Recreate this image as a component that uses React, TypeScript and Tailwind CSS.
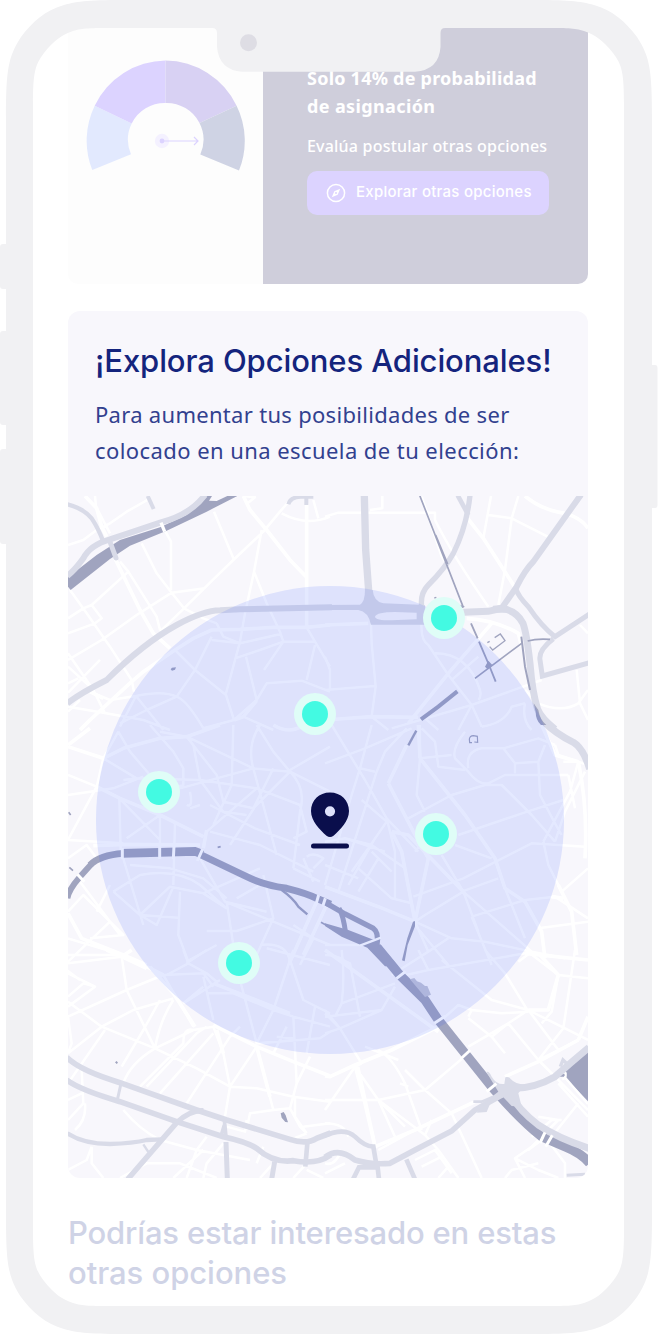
import React from 'react';

// Each tile is drawn in its own units, 3 units to one pixel
const MAP_TILES = [
    {
        id: 'nw', x: -8, y: -6,
        streets: 'M24 165L70 150L110 120L150 100L200 65L262 30M105 18L108 50L150 130M245 160L290 250L335 308L372 355L430 385L470 400M335 308L435 295M300 95L333 155V300M462 65L520 205M690 30L660 65L610 125L520 210L460 268L372 355L300 425M605 120L582 245L555 370L540 455L498 610M582 245L620 340L662 430M665 70Q740 110 810 80M760 30L775 85M550 18L585 22L560 42M335 308L230 375L125 450L24 510M205 245L95 345L70 355L24 385M95 345L125 385L105 400L24 430M30 300L80 370L150 470L215 570L222 605M180 215L205 245L290 380L300 420M24 490L100 600L135 670M24 530L90 590M24 608L120 510M24 580L55 565M345 480L405 540L498 615L522 690M455 440L405 540L350 620L260 660L180 700M350 620Q310 600 228 618L150 630L90 605M228 618L310 720M350 620Q380 630 430 715M455 450L540 460L662 432L670 455M470 400L490 440L540 460M525 505L600 480L670 455H765M670 455L612 540M558 500L590 630M740 412L765 455L810 530M765 465L740 570M430 715L522 690L590 630L620 580L725 572L810 605M550 680L640 720M24 650L130 668L250 690L330 720M228 618L180 710M24 665L60 630',
        avenues: 'M75 18L110 55L125 110L140 140M550 18L570 60L620 120L690 210L740 262M740 40V410M165 205L240 360L280 430L330 475M345 480L400 445L455 420L540 418L640 412H740L810 405M345 480L250 545L215 575L90 690L60 720M90 605L130 625M522 690L550 680L590 632',
    },
    {
        id: 'ne', x: 257, y: -6,
        streets: 'M0 80L40 68H330V90Q385 200 490 350M172 18V55L135 60M498 18L475 145M490 75L560 85L668 140M580 18L560 85L540 240L520 345M290 20L350 200L370 230M138 400L140 460L152 590L140 680L190 720M0 600L150 588M0 500L15 540V600M290 390Q285 450 310 465L370 555L440 645L470 710M330 490Q430 490 465 600Q470 620 460 630M200 715L440 645L650 570M640 640Q710 670 760 640L789 600M755 540L765 640L789 690M600 640Q590 690 620 720M640 640L600 600M765 405L789 430M470 710Q540 700 560 650L600 640M300 685L340 720M380 570L460 500M440 645L400 720',
        avenues: 'M475 145L420 75M475 145L575 300M600 18Q650 60 720 70Q770 85 789 115M0 405L130 400M500 400L370 550L250 700M425 385Q510 390 580 430L590 470M0 690L140 680L280 682',
    },
    {
        id: 'w', x: -8, y: 229,
        streets: 'M24 150L110 185L24 345M24 210L160 190L250 155M130 100L230 160L190 165M175 20L210 80L270 150M110 185L130 100L175 20M270 0L340 80L370 130V180L300 200M300 20L380 35L470 150L490 230M380 35L580 130L690 140L810 200M520 0L515 180L460 300M600 0Q560 60 580 130L650 390M590 0L640 80L690 140M810 65L690 135M230 160L420 165L590 190L720 240M360 190L580 130M420 165L400 60L380 35M420 165L490 260L560 270M720 240L590 190L440 320M690 140L585 245L510 360M690 140Q740 190 720 260L700 430M640 130L580 250L490 230M450 240L585 310L720 360M450 320L600 360L760 440M24 345L190 355M178 220L182 375L250 600M178 220L300 345M300 270V380M300 270L200 340M345 290L340 480M210 420L330 430L430 460L500 520M160 500L240 450Q350 430 420 480L500 550M160 500L240 570L355 578M240 570L330 485L430 505L500 550M240 570L290 600L340 485M360 500L355 630L385 710M440 618H530L640 580M500 530L520 660M420 400L495 530L640 590L810 660M495 530L620 560M610 450L640 580L590 690M600 480L530 520M24 560L70 510L150 590L24 710M24 400L80 360L110 400M150 480L110 560M150 590L190 630L90 640M190 690L24 640M60 470L180 630M24 690L190 690M380 710L470 660M430 505L600 430M730 400L760 470M700 430L780 470M740 395Q760 380 790 400L760 430M620 670L810 720M600 660Q680 650 690 710M700 600L760 640L720 720M390 200Q400 250 380 240M420 240L390 250M700 340L740 320L720 240',
        avenues: 'M24 60L90 10M24 65L130 100L190 70L300 40L380 35L480 0M110 185L180 220L300 270L430 335M100 362L200 358L420 360M430 370L440 315M24 565L65 640L190 690L260 720M640 0Q690 30 730 0M770 530L690 710M800 540L730 690',
    },
    {
        id: 'e', x: 257, y: 229,
        streets: 'M0 115L120 70L260 10M20 0L120 165L185 280L280 380M140 0L105 130L80 210L0 480M245 10L180 80L155 140L40 500M105 130L150 140M285 0V100L275 210L300 260M285 100L380 90M250 280L380 210L480 180H530L620 270L690 350M290 10L330 50L340 125L420 135M420 20Q380 70 390 100L430 140Q460 180 490 175L540 150L730 150M430 130Q420 80 470 70H535L570 115L640 110L660 60M570 115V145M535 70L640 40L690 60M640 110L645 210L690 295L710 330M715 225L600 262L400 330M270 380L340 290M390 360L500 400M350 390L415 500L460 620M265 515L415 460L620 355L780 365M655 350L735 200L760 110M655 350L670 420L710 500L789 430M415 500L620 680M415 500L300 570L270 590M440 575L600 525L690 515L730 540M540 490L600 640M440 575L500 720M520 460L410 500M60 340L140 360L240 430M100 430L200 520L260 535M110 225L185 290L130 370L80 440M185 280L210 380V520M0 420L100 460M140 380L200 440M150 340L70 480M0 350L60 340L180 380M160 400L100 500M270 590L380 640L480 650L620 680M270 590L310 680L370 640M270 600L370 720M310 680L200 750M0 660L105 660M0 690Q50 690 70 720M780 140L720 260L690 350M730 150L750 250M715 110L760 110M690 60L700 90L789 120M640 610L789 590M620 680L720 700M620 680L580 710M690 515L789 580',
        avenues: 'M285 100L420 270L510 400L540 490L600 530L650 620L660 700M280 0L285 100M190 175L245 60M190 175L265 320M200 320L230 380L270 590M0 485L160 545L270 590M265 320L310 400L270 590M200 320L250 330L415 500M760 110Q789 250 780 400M650 0L690 90L760 110M700 480L740 560L755 690M715 520L680 515',
    },
    {
        id: 'sw', x: -8, y: 454,
        streets: 'M24 40L185 20L200 120L285 295L400 240L460 230M24 70L105 110L24 170M24 155L125 230L285 295L410 355L510 410M24 200L200 120L310 75M105 110L70 100L24 140M24 310L125 230L220 180L340 145M340 150Q300 210 285 295M185 350L250 240L300 150M190 400Q210 340 285 295M24 200L35 280L24 310M135 240L24 400M65 360L70 460L24 510M65 430L24 450M75 460Q80 510 45 540M190 480Q240 540 300 570L410 600L570 630M260 410L410 250L440 230M240 410L370 280Q370 230 400 240M300 430L460 250M380 460L510 260L540 230M510 410L590 415L700 440L810 455M510 410L495 500M590 290L510 410M460 230L490 310L510 410M590 290L640 480L690 475M690 475L710 400L700 200M690 475L720 530L740 550M705 440V500L740 550M560 540L570 490L640 480M500 530L555 545L560 510M590 640L610 590M700 684L740 640M24 660L80 630L95 590M130 684L95 640V590M180 684L260 640L360 640L470 684M340 684L430 600M380 684L410 600L440 560M430 684L440 640L490 580M310 75L430 70L460 110M370 160L480 90M310 75L400 230M430 80L460 210M540 90L590 280M440 130L520 130L640 180L700 200L810 230M370 0L385 40L320 75M385 40L440 70L470 95M380 40L440 0M690 30L640 180M640 180L590 280L700 270M700 0L690 30L730 150L810 190M640 310L680 230M600 280L780 265L810 245M650 260L700 265M765 170L740 310M750 320L710 400M430 110L370 160M730 530L810 520M690 570L740 550M740 660L790 684M600 684L640 640M20 60L60 90',
        avenues: 'M140 0L185 20L260 55M270 50L340 130L405 230M185 20L215 0M460 100L690 190M260 50L310 75M460 225L590 290L700 335L810 378M590 290L630 440M470 240L490 310',
    },
    {
        id: 'se', x: 257, y: 454,
        streets: 'M0 200L170 180L210 110M0 250L45 235L110 340M0 190L45 235L170 180M45 235L0 180M50 160L210 100M10 10L75 40L105 200M50 0Q60 80 50 160L30 200M280 0L310 60L220 80M310 60L600 10M480 0L540 70L610 185M350 30L500 150L610 180M430 200L440 180L530 190L610 185M440 180L400 165L350 210M430 205L500 260L540 310M500 260L550 220M430 290L550 220L610 180M550 220L640 330M610 180L700 300M610 180L789 270M650 220L680 185L700 75M700 75L615 10M700 75L789 85M750 0L715 235L640 330M640 330L760 270M640 330L720 410L789 480M110 340L90 350L160 450L300 420L430 310M90 350L0 480M0 450L160 450L210 560M160 450L300 555L320 510M160 300Q200 320 240 400L290 540M240 360L300 420L380 490L470 684M225 400L250 410M300 420L250 370M100 350L150 580M160 450L240 530M120 290L220 330M300 555L340 600L400 684M160 600L270 540M270 630L330 600L380 670M290 650L350 620M340 684L370 650M0 520Q60 520 70 560M0 640Q30 650 50 600M0 670L40 650L60 640M640 500L700 510L620 590L570 625L600 684M660 560L720 640V684M540 684L560 660L640 640M760 460L680 560M570 625L640 660L700 684M620 560L680 510L710 510M700 400L789 500M610 600L650 570',
        avenues: 'M0 378L15 380L90 345L200 300L340 230M90 345L120 460L150 590M150 590L270 540L450 455M610 180H670L700 75L640 10M760 270L789 200M540 380L640 335L760 270M600 10L789 30M0 0L340 245',
    },
];

const SCHOOLS = [
    { id: 1, x: 375.5, y: 122 },
    { id: 2, x: 247, y: 217.5 },
    { id: 3, x: 91, y: 296 },
    { id: 4, x: 368, y: 338 },
    { id: 5, x: 170.5, y: 466.5 },
];

const tileTransform = (x: number, y: number) => `translate(${x} ${y}) scale(0.33333)`;

const CityMap = () => (
    <svg viewBox="0 0 520 682" className="block h-full w-full" fill="none">
        {/* Streets */}
        {MAP_TILES.map((tile) => (
            <g key={tile.id} transform={tileTransform(tile.x, tile.y)} stroke="#fff" strokeLinejoin="round">
                <path d={tile.streets} strokeWidth="7.5" />
                <path d={tile.avenues} strokeWidth="11" />
            </g>
        ))}

        {/* Water */}
        <g transform={tileTransform(-8, -6)}>
            <path d="M24 262L110 195L180 150L300 112L380 75L440 18H532L440 65L320 122L210 167L150 207L32 300L24 290Z" fill="#a0a4bf" />
            <path d="M447 32L456 18H502L470 33Z" fill="#f8f7fc" />
            <path d="M332 538L336 533L348 532L345 539L336 542Z" fill="#a0a4bf" />
        </g>
        <g transform={tileTransform(-8, 229)} stroke="#a0a4bf">
            <path d="M22 520Q26 494 60 455L95 416" strokeWidth="18" />
            <path d="M90 420Q120 390 190 385" strokeWidth="20" />
            <path d="M185 385L300 382L405 379Q415 382 425 389" strokeWidth="26" />
            <path d="M420 388L560 455Q610 480 680 490Q740 505 770 520L812 538" strokeWidth="21" />
            <path d="M665 495Q700 520 715 545L742 568" strokeWidth="7" />
            <path d="M783 592L812 608" strokeWidth="5" />
            <path d="M26 262L32 270M28 427L39 437M473 367L482 365" strokeWidth="5" />
        </g>
        <g transform={tileTransform(257, 229)} stroke="#a0a4bf">
            <path d="M5 535L60 567L145 610Q162 622 156 658" strokeWidth="16" />
            <path d="M42 550Q55 570 62 625" strokeWidth="15" />
            <path d="M0 595L70 615L155 648L220 724H180L127 668L50 635L0 603Z" fill="#a0a4bf" stroke="none" />
            <path d="M250 61L274 17" strokeWidth="7" />
            <path d="M264 590L270 588V604L248 660L239 709L231 706L247 640Z" fill="#a0a4bf" stroke="none" />
            <path d="M441 53H434L433 42Q435 32 445 32L457 34L458 52L448 51" strokeWidth="3.5" />
        </g>
        <g transform={tileTransform(257, 454)} stroke="#a0a4bf">
            <path d="M156 -8L225 76L300 150L340 210L420 310L500 410L540 455Q600 520 650 560L720 590Q770 610 794 640" strokeWidth="28" />
            <path d="M718 362L789 305V454L722 385Z" fill="#a0a4bf" stroke="none" />
            <path d="M700 376H720" strokeWidth="8" />
            <path d="M255 88L268 84L276 94L288 98L300 108H307L318 134L300 141Z" fill="#c3c5d8" stroke="none" />
            <path d="M704 362Q725 360 722 378Q720 386 712 388" stroke="#fff" strokeWidth="7" />
            <path d="M718 380L789 462" stroke="#fff" strokeWidth="7" />
        </g>
        <g transform={tileTransform(-8, 454)} fill="#a0a4bf">
            <path d="M662 490L671 486L677 496L684 517L676 516L665 503ZM165 337L170 333L174 338L170 342Z" />
        </g>

        {/* Ring road and highways */}
        <g stroke="#d9dbe8">
            <g transform={tileTransform(-8, -6)}>
                <path d="M22 258Q45 240 70 205Q90 165 150 148L220 125L300 98Q390 75 435 15" strokeWidth="18" />
                <path d="M22 43Q70 55 95 85Q115 115 130 155" strokeWidth="13" />
                <path d="M148 150L168 204" strokeWidth="15" strokeLinecap="round" />
                <path d="M263 18L281 57" strokeWidth="12" />
                <path d="M22 640Q60 610 140 570Q250 460 350 405Q430 362 480 361L540 358L816 352" strokeWidth="18" />
                <path d="M685 43Q690 22 722 20H760M739 18V45" strokeWidth="12" />
            </g>
            <g transform={tileTransform(257, -6)}>
                <path d="M0 345L105 344Q120 335 120 300L143 300Q146 335 175 340L300 345V404H138Q130 365 100 360L0 360ZM150 380Q155 366 210 366L275 368V388L200 391Q150 391 150 380Z" fill="#d9dbe8" fillRule="evenodd" stroke="none" />
                <path d="M118 16L122 180L132 315" strokeWidth="22" />
                <path d="M398 16L430 75" strokeWidth="14" />
                <path d="M435 16Q425 110 385 190Q360 235 310 285Q285 310 290 350" strokeWidth="16" />
                <path d="M415 367L490 364L530 355Q575 362 594 400Q605 430 615 520Q622 610 638 658Q648 684 690 718" strokeWidth="21" />
                <path d="M768 14L625 215Q600 240 575 290L530 355" strokeWidth="18" />
                <path d="M572 295Q580 320 610 350Q650 410 690 440L794 372" strokeWidth="15" />
                <path d="M685 446Q640 480 645 510L652 558L794 518" strokeWidth="15" />
                <path d="M490 368L505 347L530 345L540 352L560 368Z" fill="#d9dbe8" stroke="none" />
            </g>
            <g transform={tileTransform(257, 229)}>
                <path d="M655 -12Q690 25 745 52Q775 70 794 132" strokeWidth="21" />
            </g>
            <g transform={tileTransform(-8, 454)}>
                <path d="M20 322Q60 362 180 398L410 480L500 510L690 568Q740 585 770 565L812 549" strokeWidth="17" />
                <path d="M20 390Q60 420 180 455L350 515L490 560Q560 575 590 595Q640 640 700 632Q770 645 812 615" strokeWidth="17" />
                <path d="M22 550Q70 582 150 582Q220 580 260 570L305 568" strokeWidth="13" />
                <path d="M182 405L172 450" strokeWidth="9" />
                <path d="M203 688L350 518Q390 480 430 482" strokeWidth="16" />
                <path d="M493 510L498 560M484 555L493 525" strokeWidth="11" />
                <path d="M498 576L502 688M644 635L635 688" strokeWidth="15" />
                <path d="M742 580L736 650" strokeWidth="14" />
                <path d="M250 583L265 606" strokeWidth="7" />
            </g>
            <g transform={tileTransform(257, 454)}>
                <path d="M0 556Q60 532 90 560Q120 590 145 590L153 637" strokeWidth="14" />
                <path d="M0 622Q40 590 90 630Q140 645 195 640L270 600L380 543L450 480L530 435L560 415" strokeWidth="17" />
                <path d="M545 415Q620 420 690 380Q740 335 792 292" strokeWidth="21" />
                <path d="M555 430Q580 480 640 525Q700 565 792 595" strokeWidth="21" />
                <path d="M484 366Q492 362 500 380Q515 405 538 402L541 382Q550 378 558 388Q570 402 600 404L580 430L590 470L560 468L535 442L500 450L485 486L455 488L500 440L520 425Z" fill="#d9dbe8" stroke="none" />
                <path d="M445 455L470 455L505 440" strokeWidth="8" />
                <path d="M244 628L270 688M84 688L102 652H158L162 688" strokeWidth="14" />
                <path d="M725 676L780 673" strokeWidth="9" />
                <path d="M706 350L714 330L730 345" strokeWidth="10" />
            </g>
        </g>

        {/* Rail lines */}
        <g transform={tileTransform(257, -6)} stroke="#a0a4bf">
            <path d="M284 16L415 352M332 135L368 222" strokeWidth="5" />
            <path d="M405 344L420 350L410 355ZM480 530L490 512L502 525L488 538Z" fill="#a0a4bf" stroke="none" />
            <path d="M438 400L458 445M462 455L492 525L512 575" strokeWidth="5.5" />
            <path d="M450 565L590 460M608 453Q635 445 675 448" strokeWidth="5" />
            <path d="M288 688L340 650L397 604" strokeWidth="12" />
            <path d="M589 440L600 530L615 600" strokeWidth="6" />
            <path d="M487 458L494 454M509 443L526 432L540 452L503 480L494 470" strokeWidth="4" />
            <path d="M626 640L640 660Q645 690 664 705H648Q632 690 632 665Z" fill="#a0a4bf" stroke="none" />
            <path d="M328 324L334 322" strokeWidth="4" />
        </g>

        {/* Bridges */}
        <g stroke="#fff">
            <path d="M303 98L314 125" transform={tileTransform(-8, -6)} strokeWidth="10" />
            <path d="M52 448L73 470M187 368V402M299 362V402M342 362L340 402M428 372L412 408M776 510L768 538M796 520L788 545" transform={tileTransform(-8, 229)} strokeWidth="9" />
            <path d="M105 662L168 638" transform={tileTransform(257, 229)} strokeWidth="7" />
            <path d="M214 86L242 64M328 220L361 198M407 327L436 300M485 425L514 401M645 579L660 547M662 590L682 556" transform={tileTransform(257, 454)} strokeWidth="9" />
        </g>
    </svg>
);

const Gauge = () => (
    <svg viewBox="0 0 160 112" className="ml-[18px] mt-8 h-28 w-40" fill="none">
        <path d="M6.3 110A79.5 79.5 0 0 1 8.7 45.7L45.7 63.5A37 37 0 0 0 45 94.3Z" fill="#e2e9fe" />
        <path d="M8.7 45.7A79.5 79.5 0 0 1 79.6 .5V43A37 37 0 0 0 45.7 63.5Z" fill="#dcd3ff" />
        <path d="M79.6 .5A79.5 79.5 0 0 1 150.6 45.7L113.5 63A37 37 0 0 0 79.6 43Z" fill="#d8d1f3" />
        <path d="M150.6 45.7A79.5 79.5 0 0 1 153 110.6L114.3 94.5A37 37 0 0 0 113.5 63Z" fill="#cfd3e4" />
        <circle cx="76" cy="81" r="7.2" fill="#f4f1ff" />
        <circle cx="76" cy="81" r="2.4" fill="#dcd3ff" />
        <path d="M76 81H111.500M108 77L112 81L108 85" stroke="#dcd3ff" strokeWidth="1.2" />
    </svg>
);

const CompassIcon = () => (
    <svg viewBox="0 0 20 20" className="h-5 w-5" fill="none">
        <circle cx="10" cy="10" r="8.6" stroke="#fff" strokeWidth="1.5" />
        <path d="M14.200 5.800L11.700 11.700L5.800 14.200L8.300 8.300Z" fill="#fff" />
        <circle cx="10" cy="10" r="1" fill="#dcd3ff" />
    </svg>
);

const DeviceFrame = () => (
    <svg viewBox="0 0 658 1334" className="pointer-events-none absolute inset-0 z-20 h-full w-full">
        {/* Everything outside of the bezel stays white */}
        <path
            d="M0 0H658V1334H0ZM6 120V1214C6 1264 8 1277 21 1297C32 1312 46 1324 64 1329C78 1333 90 1334 130 1334H528C568 1334 580 1333 594 1329C612 1324 626 1312 637 1297C650 1277 652 1264 652 1214V120C652 70 650 57 637 37C626 22 612 10 594 5C580 1 568 0 528 0H130C90 0 78 1 64 5C46 10 32 22 21 37C8 57 6 70 6 120Z"
            fill="#fff"
            fillRule="evenodd"
        />
        <path
            d="M6 120V1214C6 1264 8 1277 21 1297C32 1312 46 1324 64 1329C78 1333 90 1334 130 1334H528C568 1334 580 1333 594 1329C612 1324 626 1312 637 1297C650 1277 652 1264 652 1214V120C652 70 650 57 637 37C626 22 612 10 594 5C580 1 568 0 528 0H130C90 0 78 1 64 5C46 10 32 22 21 37C8 57 6 70 6 120ZM33 105V1229C33 1262 35 1269 44 1281C54 1294 62 1299 73 1303C83 1306 90 1306 115 1306H542C567 1306 574 1306 584 1303C595 1299 603 1294 613 1281C622 1269 624 1262 624 1229V105C624 72 622 65 613 53C603 40 595 35 584 31C574 28 567 28 542 28H445Q440.500 28 440.500 33V47Q439 70 415 71.700H242Q219 70 217 47V33Q217 28 212 28H115C90 28 83 28 73 31C62 35 54 40 44 53C35 65 33 72 33 105Z"
            fill="#f1f1f3"
            fillRule="evenodd"
        />
        <path d="M6 244H3Q0 244 0 247V286Q0 289 3 289H6ZM6 331H3Q0 331 0 334V422Q0 425 3 425H6ZM6 449H3Q0 449 0 452V541Q0 544 3 544H6ZM651 365H655Q657.500 365 657.500 368V505Q657.500 508 655 508H651Z" fill="#f1f1f3" />
        <circle cx="248.500" cy="42.700" r="8.500" fill="#dedde4" />
    </svg>
);

const ProbabilityCard = () => (
    <section className="flex h-64 overflow-hidden rounded-b-[10px]">
        <div className="w-[195px] bg-[#fdfdfd]">
            <Gauge />
        </div>
        <div className="flex-1 bg-[#cfcedb] pl-11 pt-9 font-['Noto_Sans',sans-serif] text-white">
            <h3 className="whitespace-nowrap text-[18px] font-bold leading-7">
                <span className="block tracking-[0.23px]">Solo 14% de probabilidad</span>
                <span className="block tracking-[0.38px]">de asignación</span>
            </h3>
            <p className="mt-3.5 whitespace-nowrap text-base font-medium leading-6 tracking-[0.2px]">Evalúa postular otras opciones</p>
            <button className="mt-[13px] flex h-11 w-[242px] items-center gap-2.5 rounded-[10px] bg-[#dcd3ff] pl-[19px] font-['Inter',sans-serif] text-[15px] font-medium">
                <CompassIcon />
                <span className="-mt-0.5 whitespace-nowrap tracking-[0.26px]">Explorar otras opciones</span>
            </button>
        </div>
    </section>
);

const ExploreCard = () => (
    <section className="mt-[27px] overflow-hidden rounded-xl bg-[#f8f7fc]">
        <div className="h-[185px] pl-[27px] pt-[30px]">
            <h2 className="whitespace-nowrap font-['Inter',sans-serif] text-[31px] font-medium leading-10 tracking-[-0.1px] text-[#14247d]">
                ¡Explora Opciones Adicionales!
            </h2>
            <p className="mt-[15px] whitespace-nowrap font-['Noto_Sans',sans-serif] text-[22px] leading-9 text-[#32418f]">
                <span className="block tracking-[0.3px]">Para aumentar tus posibilidades de ser</span>
                <span className="block tracking-[0.43px]">colocado en una escuela de tu elección:</span>
            </p>
        </div>
        <div className="relative h-[682px] overflow-hidden">
            <CityMap />
            {/* Search radius */}
            <div className="absolute left-[28px] top-[90px] h-[468px] w-[468px] rounded-full bg-[#3255ff]/13" />
            {SCHOOLS.map((school) => (
                <div
                    key={school.id}
                    className="absolute flex h-[42px] w-[42px] -translate-x-1/2 -translate-y-1/2 items-center justify-center rounded-full bg-[#dffdf7]"
                    style={{ left: school.x, top: school.y }}
                >
                    <div className="h-[26px] w-[26px] rounded-full bg-[#43fae2]" />
                </div>
            ))}
            <svg viewBox="0 0 38 57" className="absolute left-[243px] top-[296px] h-[57px] w-[38px]">
                <path d="M19 .5C8 .5 0 8.500 0 19C0 29 9 38 15.500 43.700Q19 46.500 22.500 43.700C29 38 38 29 38 19C38 8.500 30 .5 19 .5ZM19 14.200A5.100 5.100 0 1 1 19 24.400A5.100 5.100 0 1 1 19 14.200Z" fill="#0a0e4c" />
                <rect x="0" y="51.500" width="38" height="5" rx="2.500" fill="#0a0e4c" />
            </svg>
        </div>
    </section>
);

export default function App() {
    return (
        <div className="relative h-[1334px] w-[658px] overflow-hidden bg-white">
            <main className="flex flex-col pl-[68px] pr-[70px] pt-7">
                <ProbabilityCard />
                <ExploreCard />
                <h2 className="mt-[35px] whitespace-nowrap font-['Inter',sans-serif] text-[31px] font-medium leading-10 text-[#cfd3e6]">
                    <span className="block tracking-[-0.17px]">Podrías estar interesado en estas</span>
                    <span className="block tracking-[-0.04px]">otras opciones</span>
                </h2>
            </main>
            <DeviceFrame />
        </div>
    );
}
